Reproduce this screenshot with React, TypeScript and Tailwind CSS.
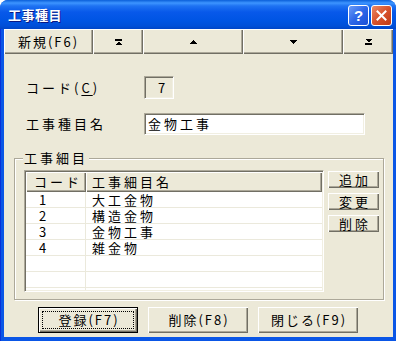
import React from "react";

const raised =
  "bg-[#ece9d8] shadow-[inset_1px_1px_0_#ffffff,inset_-1px_-1px_0_#716f64,inset_-2px_-2px_0_#aca899]";
const sunken =
  "border border-t-[#aca899] border-l-[#aca899] border-r-white border-b-white shadow-[inset_1px_1px_0_#716f64,inset_-1px_-1px_0_#f1efe2]";

function TriUp() {
  return (
    <svg width="7" height="4" viewBox="0 0 7 4" shapeRendering="crispEdges">
      <polygon points="3.5,0 7,4 0,4" fill="#000" />
    </svg>
  );
}
function TriDown() {
  return (
    <svg width="7" height="4" viewBox="0 0 7 4" shapeRendering="crispEdges">
      <polygon points="0,0 7,0 3.5,4" fill="#000" />
    </svg>
  );
}
function First() {
  return (
    <svg width="7" height="6" viewBox="0 0 7 6" shapeRendering="crispEdges">
      <rect x="0" y="0" width="7" height="2" fill="#000" />
      <polygon points="3.5,2.5 7,6 0,6" fill="#000" />
    </svg>
  );
}
function Last() {
  return (
    <svg width="7" height="6" viewBox="0 0 7 6" shapeRendering="crispEdges">
      <polygon points="0,0 7,0 3.5,3.5" fill="#000" />
      <rect x="0" y="4" width="7" height="2" fill="#000" />
    </svg>
  );
}

const rows = [
  ["1", "大工金物"],
  ["2", "構造金物"],
  ["3", "金物工事"],
  ["4", "雑金物"],
  ["", ""],
  ["", ""],
];

export default function App() {
  return (
    <div className="w-[396px] h-[341px] bg-white font-['Noto_Sans_CJK_JP',sans-serif] text-black">
      <div className="w-full h-full flex flex-col rounded-t-[8px] overflow-hidden bg-[#0a56e6]">
        {/* Title bar */}
        <div className="h-[29px] shrink-0 flex items-center pl-[8px] pr-[4px] bg-[linear-gradient(to_bottom,#0a5fd9_0px,#3d95ff_3px,#1e72f2_6px,#0859ea_12px,#0055e4_20px,#004fd8_26px,#0045c6_29px)]">
          <span className="text-white font-bold text-[13px] leading-[16px] tracking-[0.5px] [text-shadow:1px_1px_0_#0a1883]">
            工事種目
          </span>
          <div className="ml-auto flex gap-[2px] mt-[1px]">
            <div className="w-[21px] h-[21px] rounded-[3px] border border-white bg-[linear-gradient(135deg,#6a9cf7_0%,#2d66e8_50%,#1a4fd6_100%)] flex items-center justify-center">
              <span className="text-white font-bold text-[15px] leading-none font-['Liberation_Sans',sans-serif]">?</span>
            </div>
            <div className="w-[21px] h-[21px] rounded-[3px] border border-white bg-[linear-gradient(135deg,#eb8a66_0%,#d8522c_50%,#bf3a16_100%)] flex items-center justify-center">
              <svg width="11" height="11" viewBox="0 0 11 11">
                <path d="M1.5 1.5 L9.5 9.5 M9.5 1.5 L1.5 9.5" stroke="#fff" strokeWidth="2" strokeLinecap="square" />
              </svg>
            </div>
          </div>
        </div>

        {/* Body with frame */}
        <div className="flex-1 flex pl-[3px] pr-[4px] pb-[4px] border-l border-[#0831d9]">
          <div className="w-[389px] bg-[#ece9d8] flex flex-col">
            {/* Toolbar */}
            <div className="h-[25px] shrink-0 flex">
              <div className={`w-[89px] flex items-center justify-center text-[13px] tracking-[2px] ${raised}`}>
                新規(F6)
              </div>
              <div className={`w-[50px] flex items-center justify-center ${raised}`}>
                <First />
              </div>
              <div className={`w-[100px] flex items-center justify-center ${raised}`}>
                <TriUp />
              </div>
              <div className={`w-[100px] flex items-center justify-center ${raised}`}>
                <TriDown />
              </div>
              <div className={`w-[50px] flex items-center justify-center ${raised}`}>
                <Last />
              </div>
            </div>

            {/* Code row */}
            <div className="flex items-center mt-[22px] pl-[22px] h-[23px]">
              <span className="w-[118px] text-[13px] tracking-[3px] leading-[16px]">
                コード(<span className="underline underline-offset-2">C</span>)
              </span>
              <div className={`w-[30px] h-[23px] flex items-center justify-center pl-[5px] text-[13px] ${sunken} bg-[#ece9d8]`}>
                7
              </div>
            </div>

            {/* Name row */}
            <div className="flex items-center mt-[14px] pl-[22px] h-[22px]">
              <span className="w-[118px] text-[13px] tracking-[3px] leading-[16px]">工事種目名</span>
              <div className={`w-[221px] h-[22px] flex items-center pl-[3px] text-[13px] tracking-[3px] bg-white ${sunken}`}>
                金物工事
              </div>
            </div>

            {/* Group box */}
            <div className="relative mt-[23px] ml-[10px] w-[370px] h-[142px] border border-[#aca899] shadow-[inset_1px_1px_0_#ffffff,1px_1px_0_#ffffff] pl-[9px] pt-[11px] flex gap-[4px]">
              <span className="absolute left-[8px] -top-[9px] px-[1px] bg-[#ece9d8] text-[13px] tracking-[3px] leading-[16px]">
                工事細目
              </span>
              {/* List view */}
              <div className={`w-[300px] h-[122px] bg-white flex flex-col overflow-hidden ${sunken} p-[1px]`}>
                <div className="h-[20px] shrink-0 flex text-[13px] tracking-[3px] leading-[16px]">
                  <div className={`w-[60px] flex items-center pl-[8px] ${raised}`}>コード</div>
                  <div className={`flex-1 flex items-center pl-[6px] ${raised}`}>工事細目名</div>
                </div>
                {rows.map((r, i) => (
                  <div key={i} className="h-[16px] shrink-0 flex text-[13px] tracking-[3px] leading-[15px] border-b border-[#ebe9dc]">
                    <div className="w-[60px] pl-[13px] border-r border-[#ebe9dc]">{r[0]}</div>
                    <div className="flex-1 pl-[6px]">{r[1]}</div>
                  </div>
                ))}
                <div className="flex-1 flex">
                  <div className="w-[60px] border-r border-[#ebe9dc]" />
                </div>
              </div>
              {/* Side buttons */}
              <div className="flex flex-col gap-[5px] mt-[1px]">
                {["追加", "変更", "削除"].map((t) => (
                  <div key={t} className={`w-[51px] h-[17px] flex items-center justify-center pl-[3px] text-[13px] tracking-[3px] leading-[16px] ${raised}`}>
                    {t}
                  </div>
                ))}
              </div>
            </div>

            {/* Bottom buttons */}
            <div className="flex gap-[10px] pl-[34px] mt-[7px]">
              <div className="w-[100px] h-[26px] border border-black p-0">
                <div className={`w-full h-full flex items-center justify-center p-[3px] ${raised}`}>
                  <div className="w-full h-full border border-dotted border-black flex items-center justify-center text-[13px] tracking-[2px] leading-[16px] pl-[2px]">
                    登録(F7)
                  </div>
                </div>
              </div>
              <div className={`w-[100px] h-[26px] flex items-center justify-center text-[13px] tracking-[2px] leading-[16px] pl-[2px] ${raised}`}>
                削除(F8)
              </div>
              <div className={`w-[100px] h-[26px] flex items-center justify-center text-[13px] tracking-[2px] leading-[16px] pl-[2px] ${raised}`}>
                閉じる(F9)
              </div>
            </div>
          </div>
        </div>
      </div>
    </div>
  );
}
